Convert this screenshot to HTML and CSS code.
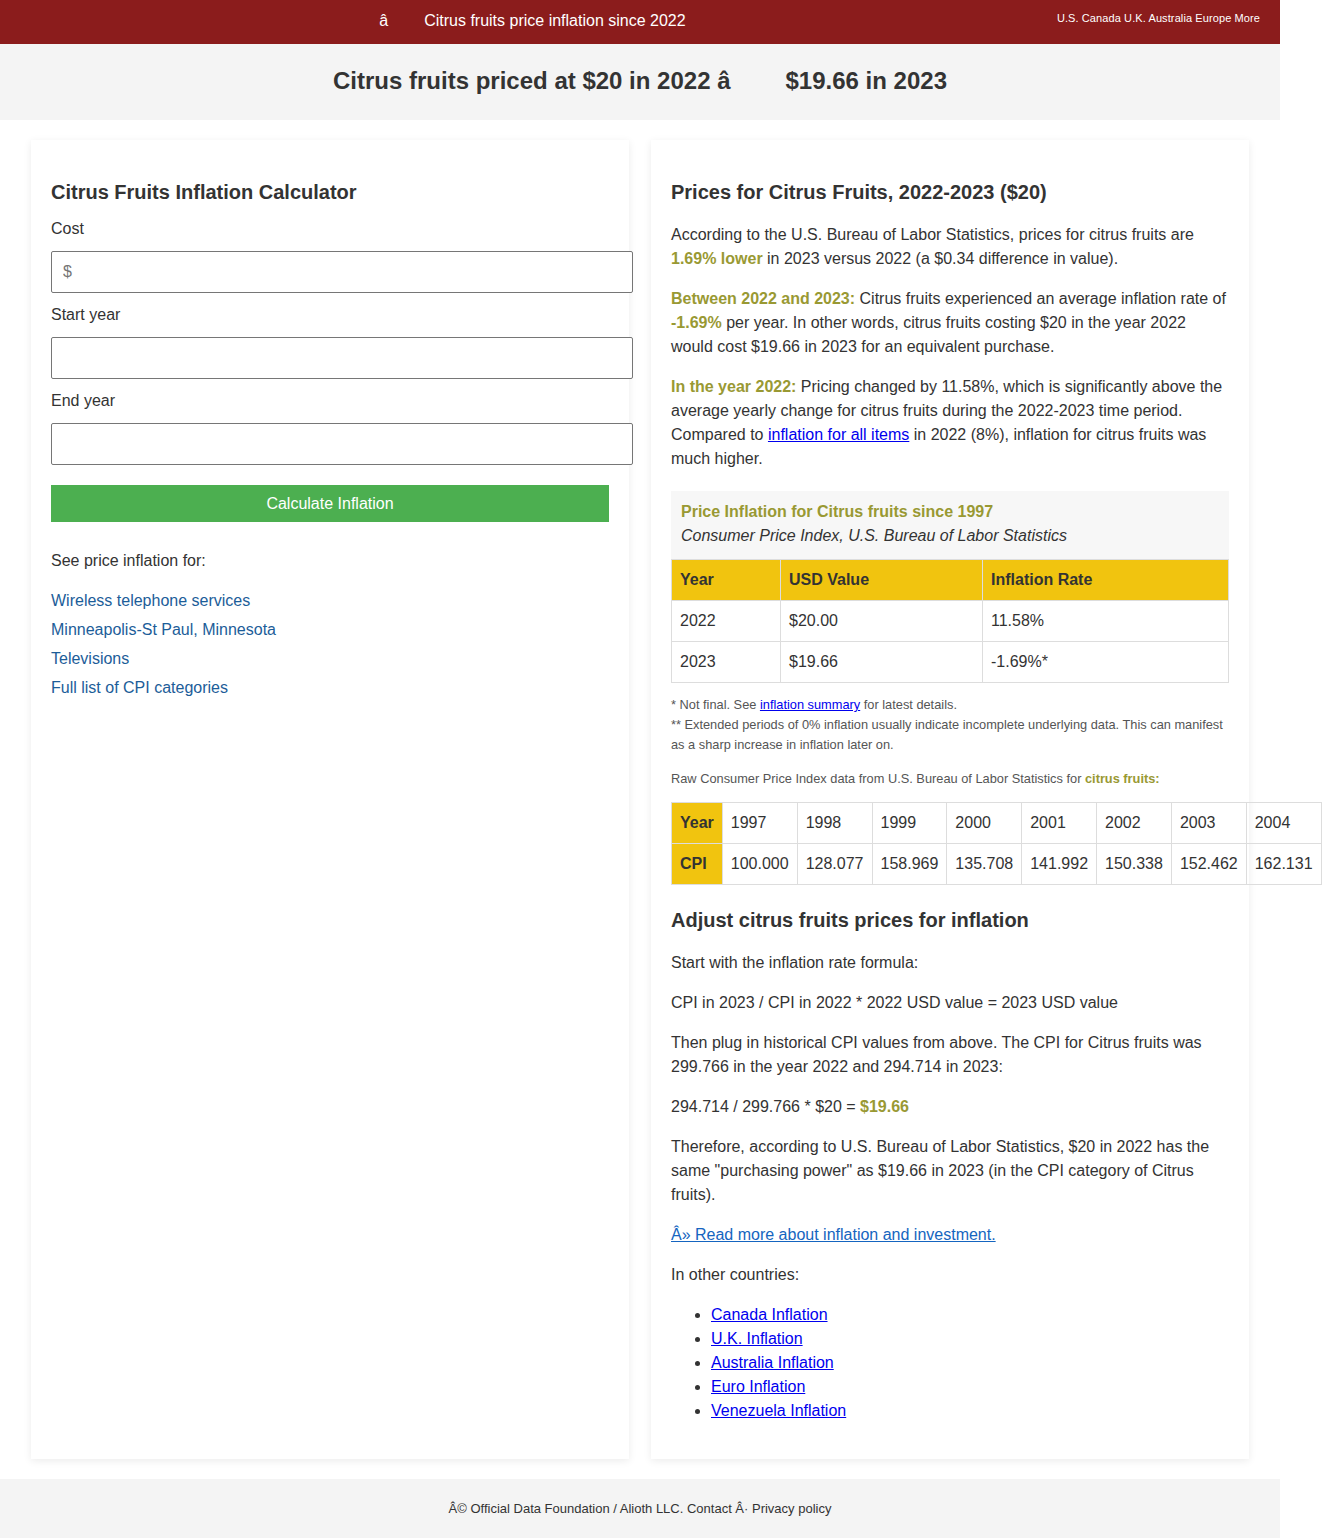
FILE: index.html
```html
<!DOCTYPE html>
<html lang="en">
<head>
<meta charset="utf-8">
<title>Citrus fruits price inflation since 2022</title>
<link rel="stylesheet" href="styles.css">
</head>
<body>
<div class="page">
  <header class="topbar">
    <div class="topbar-title">â<span class="gap-s"></span>Citrus fruits price inflation since 2022</div>
    <nav class="topbar-nav">U.S. Canada U.K. Australia Europe More</nav>
  </header>
  <div class="hero">
    <h1 class="hero-title">Citrus fruits priced at $20 in 2022 â<span class="gap-l"></span>$19.66 in 2023</h1>
  </div>
  <main class="columns">
    <section class="card">
      <h2 class="card-title calc-title">Citrus Fruits Inflation Calculator</h2>
      <label class="field-label">Cost</label>
      <input class="field" type="text" placeholder="$">
      <label class="field-label">Start year</label>
      <input class="field" type="text">
      <label class="field-label">End year</label>
      <input class="field" type="text">
      <button class="calc-btn" type="button">Calculate Inflation</button>
      <p class="see-also">See price inflation for:</p>
      <div class="side-links">
        <a class="side-link" href="#">Wireless telephone services</a>
        <a class="side-link" href="#">Minneapolis-St Paul, Minnesota</a>
        <a class="side-link" href="#">Televisions</a>
        <a class="side-link" href="#">Full list of CPI categories</a>
      </div>
    </section>
    <section class="card">
      <h2 class="card-title">Prices for Citrus Fruits, 2022-2023 ($20)</h2>
      <p class="para">According to the U.S. Bureau of Labor Statistics, prices for citrus fruits are <b class="hl">1.69% lower</b> in 2023 versus 2022 (a $0.34 difference in value).</p>
      <p class="para"><b class="hl">Between 2022 and 2023:</b> Citrus fruits experienced an average inflation rate of <b class="hl">-1.69%</b> per year. In other words, citrus fruits costing $20 in the year 2022 would cost $19.66 in 2023 for an equivalent purchase.</p>
      <p class="para"><b class="hl">In the year 2022:</b> Pricing changed by 11.58%, which is significantly above the average yearly change for citrus fruits during the 2022-2023 time period. Compared to <a class="plain-link" href="#">inflation for all items</a> in 2022 (8%), inflation for citrus fruits was much higher.</p>

      <div class="table-box">
        <div class="table-caption">
          <div class="caption-title">Price Inflation for Citrus fruits since 1997</div>
          <div class="caption-sub">Consumer Price Index, U.S. Bureau of Labor Statistics</div>
        </div>
        <table class="data-table">
          <thead>
            <tr><th class="c1">Year</th><th class="c2">USD Value</th><th>Inflation Rate</th></tr>
          </thead>
          <tbody>
            <tr><td>2022</td><td>$20.00</td><td>11.58%</td></tr>
            <tr><td>2023</td><td>$19.66</td><td>-1.69%*</td></tr>
          </tbody>
        </table>
      </div>

      <div class="notes">
        <div>* Not final. See <a class="plain-link" href="#">inflation summary</a> for latest details.</div>
        <div>** Extended periods of 0% inflation usually indicate incomplete underlying data. This can manifest as a sharp increase in inflation later on.</div>
      </div>
      <p class="raw-intro">Raw Consumer Price Index data from U.S. Bureau of Labor Statistics for <b class="hl">citrus fruits:</b></p>

      <table class="raw-table">
        <tr><th>Year</th><td>1997</td><td>1998</td><td>1999</td><td>2000</td><td>2001</td><td>2002</td><td>2003</td><td>2004</td></tr>
        <tr><th>CPI</th><td>100.000</td><td>128.077</td><td>158.969</td><td>135.708</td><td>141.992</td><td>150.338</td><td>152.462</td><td>162.131</td></tr>
      </table>

      <h2 class="card-title adjust-title">Adjust citrus fruits prices for inflation</h2>
      <p class="para">Start with the inflation rate formula:</p>
      <p class="para">CPI in 2023 / CPI in 2022 * 2022 USD value = 2023 USD value</p>
      <p class="para">Then plug in historical CPI values from above. The CPI for Citrus fruits was 299.766 in the year 2022 and 294.714 in 2023:</p>
      <p class="para">294.714 / 299.766 * $20 = <b class="hl">$19.66</b></p>
      <p class="para">Therefore, according to U.S. Bureau of Labor Statistics, $20 in 2022 has the same "purchasing power" as $19.66 in 2023 (in the CPI category of Citrus fruits).</p>
      <p class="para"><a class="more-link" href="#">Â» Read more about inflation and investment.</a></p>
      <p class="para">In other countries:</p>
      <ul class="country-list">
        <li><a class="plain-link" href="#">Canada Inflation</a></li>
        <li><a class="plain-link" href="#">U.K. Inflation</a></li>
        <li><a class="plain-link" href="#">Australia Inflation</a></li>
        <li><a class="plain-link" href="#">Euro Inflation</a></li>
        <li><a class="plain-link" href="#">Venezuela Inflation</a></li>
      </ul>
    </section>
  </main>
  <footer class="footer">Â© Official Data Foundation / Alioth LLC. Contact Â· Privacy policy</footer>
</div>
</body>
</html>
```

FILE: styles.css
```css
html, body {
  margin: 0;
  padding: 0;
  background: #ffffff;
}
body {
  font-family: "Liberation Sans", Arial, sans-serif;
  color: #333333;
  font-size: 16px;
}
.page {
  width: 1280px;
}
.topbar {
  height: 44px;
  box-sizing: border-box;
  background: #8b1c1c;
  color: #ffffff;
  display: flex;
  align-items: flex-start;
  padding: 12px 20px 0 20px;
}
.topbar-title {
  flex: 1;
  text-align: center;
  font-size: 16px;
  line-height: 18px;
  margin-right: 12px;
}
.gap-s {
  display: inline-block;
  width: 36px;
}
.topbar-nav {
  font-size: 11px;
  line-height: 13px;
  letter-spacing: 0.1px;
}
.hero {
  background: #f4f4f4;
  height: 76px;
  display: flex;
  align-items: center;
  justify-content: center;
}
.hero-title {
  margin: 0;
  font-size: 24px;
  line-height: 28px;
  font-weight: bold;
  color: #333333;
  padding-bottom: 2px;
}
.gap-l {
  display: inline-block;
  width: 55px;
}
.columns {
  display: flex;
  gap: 22px;
  padding: 20px 31px;
  align-items: stretch;
}
.card {
  width: 598px;
  box-sizing: border-box;
  background: #ffffff;
  padding: 20px;
  box-shadow: 0 2px 8px rgba(0, 0, 0, 0.08);
}
.card-title {
  font-size: 20px;
  line-height: 24px;
  font-weight: bold;
  margin: 20px 0 19px 0;
  color: #333333;
}
.calc-title {
  margin-bottom: 13px;
}
.adjust-title {
  margin: 23px 0 19px 0;
}
.field-label {
  display: block;
  line-height: 24px;
  margin-bottom: 10px;
}
.field {
  display: block;
  width: 100%;
  height: 40px;
  box-sizing: content-box;
  padding: 0 11px;
  border: 1px solid #767676;
  border-radius: 2px;
  font-family: "Liberation Sans", Arial, sans-serif;
  font-size: 16px;
  margin: 0 0 10px 0;
  background: #ffffff;
}
.field::placeholder {
  color: #757575;
}
.calc-btn {
  display: block;
  width: 100%;
  height: 37px;
  margin-top: 20px;
  background: #4caf50;
  color: #ffffff;
  border: none;
  font-family: "Liberation Sans", Arial, sans-serif;
  font-size: 16px;
}
.see-also {
  margin: 27px 0 16px 0;
  line-height: 24px;
}
.side-links {
  display: flex;
  flex-direction: column;
  gap: 5px;
}
.side-link {
  color: #1c5d99;
  text-decoration: none;
  line-height: 24px;
}
.para {
  margin: 0 0 16px 0;
  line-height: 24px;
}
.hl {
  color: #999933;
  font-weight: bold;
}
.plain-link {
  color: #0000ee;
  text-decoration: underline;
}
.more-link {
  color: #1565c0;
  text-decoration: underline;
}
.table-box {
  margin-top: 20px;
}
.table-caption {
  background: #f7f7f7;
  padding: 9px 10px 11px 10px;
  line-height: 24px;
}
.caption-title {
  color: #999933;
  font-weight: bold;
}
.caption-sub {
  font-style: italic;
}
.data-table {
  width: 100%;
  border-collapse: collapse;
}
.data-table th,
.data-table td {
  border: 1px solid #dddddd;
  padding: 8px;
  line-height: 24px;
  text-align: left;
}
.data-table th {
  background: #f1c40f;
  font-weight: bold;
}
.data-table .c1 {
  width: 92px;
}
.data-table .c2 {
  width: 185px;
}
.notes {
  margin-top: 12px;
  font-size: 12.8px;
  line-height: 20px;
  color: #555555;
}
.raw-intro {
  margin: 14px 0 13px 0;
  font-size: 12.8px;
  line-height: 20px;
  color: #555555;
}
.raw-table {
  border-collapse: collapse;
}
.raw-table th,
.raw-table td {
  border: 1px solid #dddddd;
  padding: 8px;
  line-height: 24px;
  text-align: left;
  white-space: nowrap;
}
.raw-table th {
  background: #f1c40f;
  font-weight: bold;
}
.country-list {
  margin: 0 0 16px 0;
  padding-left: 40px;
  line-height: 24px;
}
.footer {
  background: #f4f4f4;
  text-align: center;
  font-size: 13px;
  line-height: 18px;
  padding: 21px 0 20px 0;
  color: #333333;
}
```
